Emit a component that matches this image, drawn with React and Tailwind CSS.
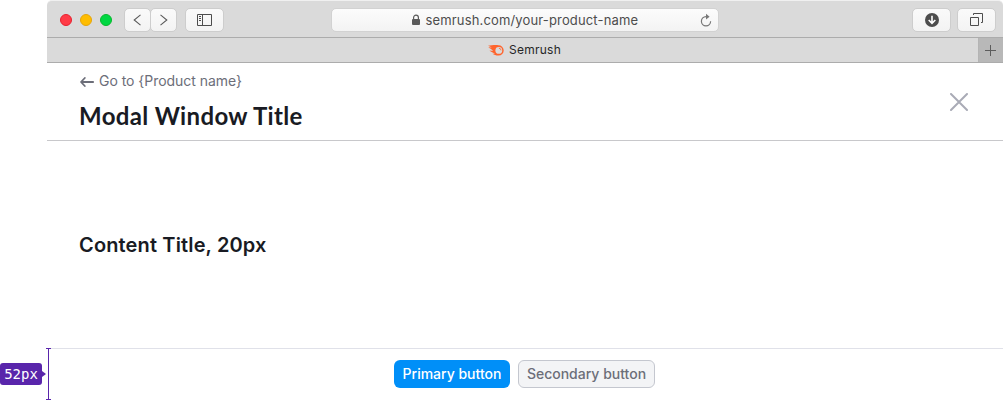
const keyBtn =
  "flex h-6 items-center justify-center rounded-[5px] border border-[#cdcdcd] bg-gradient-to-b from-[#fafafa] to-[#f3f3f3]";

function Toolbar() {
  return (
    <div className="flex h-[38px] items-center rounded-t-[5px] border-t border-b border-t-[#f0f0f0] border-b-[#acacac] bg-[#dadada] pt-px pl-[13px] pr-[7px]">
      <div className="flex gap-2">
        <span className="size-3 rounded-full border border-[#e8202e] bg-[#ff3b47]" />
        <span className="size-3 rounded-full border border-[#e5a50a] bg-[#ffbd00]" />
        <span className="size-3 rounded-full border border-[#06b92c] bg-[#00d742]" />
      </div>
      <div className="ml-3 flex">
        <div className={keyBtn + " w-[27px] pr-[2px]"}>
          <svg width="8" height="12" viewBox="0 0 8 12" fill="none" stroke="#5a5a5a" strokeWidth="1.1"><path d="M7.5.8 1.2 6 7.5 11.2" /></svg>
        </div>
        <div className={keyBtn + " -ml-px w-[27px]"}>
          <svg width="8" height="12" viewBox="0 0 8 12" fill="none" stroke="#5a5a5a" strokeWidth="1.1"><path d="M.5.8 6.8 6 .5 11.2" /></svg>
        </div>
      </div>
      <div className={keyBtn + " ml-2 w-[39px]"}>
        <svg width="15" height="12" viewBox="0 0 15 12" fill="none" stroke="#4d4d4d">
          <path d="M.5.5h14v11H.5zM5.5.5v11M2 2.5h2M2 4.5h2M2 6.5h2" />
        </svg>
      </div>
      <div className="ml-[107px] flex h-6 w-[388px] items-center rounded-[5px] border border-[#d2d2d2] bg-gradient-to-b from-[#fcfcfc] to-[#f3f3f3] pl-[79px] pr-[6px]">
        <svg width="10" height="12" viewBox="0 0 10 12">
          <rect x="1" y="5" width="8" height="6" rx="1" fill="#5a5a5a" />
          <path d="M2.6 5.5V3.5a2.4 2.4 0 0 1 4.8 0v2" fill="none" stroke="#5a5a5a" strokeWidth="1.2" />
        </svg>
        <span className="ml-[4.5px] whitespace-nowrap text-[13px] leading-5 tracking-[0.15px] text-[#4d4d4d]">semrush.com/your-product-name</span>
        <svg className="ml-auto" width="12" height="14" viewBox="0 0 12 14" fill="none" stroke="#777" strokeWidth="1.2">
          <path d="M7 3.6H6A4.6 4.6 0 1 0 10.6 8.2" />
          <path d="M6 .8 9.6 3.7 6 6.6Z" fill="#777" stroke="none" />
        </svg>
      </div>
      <div className={keyBtn + " ml-auto w-[39px]"}>
        <svg width="14" height="14" viewBox="0 0 14 14">
          <circle cx="7" cy="7" r="7" fill="#4d4d4d" />
          <path d="M7 2.7v7M3.7 7 7 10.3 10.3 7" fill="none" stroke="#fff" strokeWidth="1.6" />
        </svg>
      </div>
      <div className={keyBtn + " ml-[6px] w-[39px]"}>
        <svg width="13" height="13" viewBox="0 0 13 13" fill="none" stroke="#4d4d4d">
          <path d="M.5 4.5h8v8h-8zM3.5 2V.5h9v9H11" />
        </svg>
      </div>
    </div>
  );
}

function TabBar() {
  return (
    <div className="flex h-[25px] border-b border-[#acacac] bg-[#dadada]">
      <div className="flex flex-1 items-center justify-center gap-[5px] pl-[24px]">
        <svg width="16" height="11" viewBox="0 0 16 11">
          <path fill="#ff642d" d="M0 .7C3 .5 6-.1 10.4.2A5.2 5.2 0 0 1 10.6 10.6C7.8 10.6 6.3 9.5 4.5 8.7L7 8.8C5.2 7.6 3 6.7 1.5 5.4l3.6.5C3.7 4.3 1.5 3.2.3 2.3l3.5.2C2.5 1.7 1 1.2 0 .7Z" />
          <circle cx="10.8" cy="5.4" r="3.4" fill="#dadada" />
          <path d="M10.9 3.3a2.1 2.1 0 0 1 2.1 2.1" fill="none" stroke="#ff642d" strokeWidth=".8" />
        </svg>
        <span className="text-xs tracking-[0.25px] text-[#262626]">Semrush</span>
      </div>
      <div className="flex w-[25px] items-center border-l border-[#b4b4b4] bg-[#b8b8b8] pl-[6px]">
        <svg width="11" height="11" viewBox="0 0 11 11" stroke="#5c5c5c"><path d="M5.5 0v11M0 5.5h11" /></svg>
      </div>
    </div>
  );
}

function Header() {
  return (
    <header className="flex h-[78px] items-center justify-between border-b border-[#c8c8cb] pl-[33px] pr-[35px]">
      <div className="h-full pt-2">
        <a className="flex h-5 items-center text-sm tracking-[-0.04px] text-[#6c6e79]">
          <svg className="mt-px mr-[5px]" width="14" height="10" viewBox="0 0 14 10" fill="none" stroke="#6c6e79" strokeWidth="1.8" strokeLinecap="round" strokeLinejoin="round">
            <path d="M13.2 5H1.2M4.8 1 1 5l3.8 4" />
          </svg>
          Go to &#123;Product name&#125;
        </a>
        <h1 className="mt-[9px] -ml-px whitespace-nowrap font-['Lato',sans-serif] text-2xl leading-8 font-bold tracking-[0.35px] text-[#191b23]">Modal Window Title</h1>
      </div>
      <svg width="18" height="18" viewBox="0 0 18 18" stroke="#a9abb6" strokeWidth="2" strokeLinecap="round"><path d="m1 1 16 16M17 1 1 17" /></svg>
    </header>
  );
}

export default function App() {
  return (
    <div className="flex h-[400px] w-[1003px] overflow-hidden bg-white font-['Inter',sans-serif]">
      <aside className="relative z-10 flex h-[52px] w-[47px] shrink-0 items-center self-end">
        <span className="flex h-[22px] w-[42px] items-center justify-center rounded-[3px] bg-[#5925ab] font-['DejaVu_Sans_Mono',monospace] text-sm text-white">52px</span>
        <svg width="4" height="6" viewBox="0 0 4 6" fill="#5925ab"><path d="m0 0 4 3-4 3Z" /></svg>
        <svg className="absolute top-0 left-[46px]" width="5" height="52" viewBox="0 0 5 52" stroke="#5925ab"><path d="M0 .5h5M2.5 0v52M0 51.5h5" /></svg>
      </aside>
      <section className="flex min-w-0 flex-1 flex-col">
        <Toolbar />
        <TabBar />
        <Header />
        <main className="flex-1 pt-[89px] pl-8">
          <h2 className="text-xl leading-[30px] font-semibold tracking-[0.14px] text-[#191b23]">Content Title, 20px</h2>
        </main>
        <footer className="flex h-[52px] items-start gap-2 border-t border-[#e0e1e9] pt-[11px] pl-[347px] text-sm font-medium">
          <button className="h-7 w-[116px] rounded-md bg-[#008ff8] whitespace-nowrap text-white">Primary button</button>
          <button className="h-7 w-[137px] rounded-md border border-[#c4c7cf] bg-[#f3f4f6] whitespace-nowrap text-[#6c6e79]">Secondary button</button>
        </footer>
      </section>
    </div>
  );
}
